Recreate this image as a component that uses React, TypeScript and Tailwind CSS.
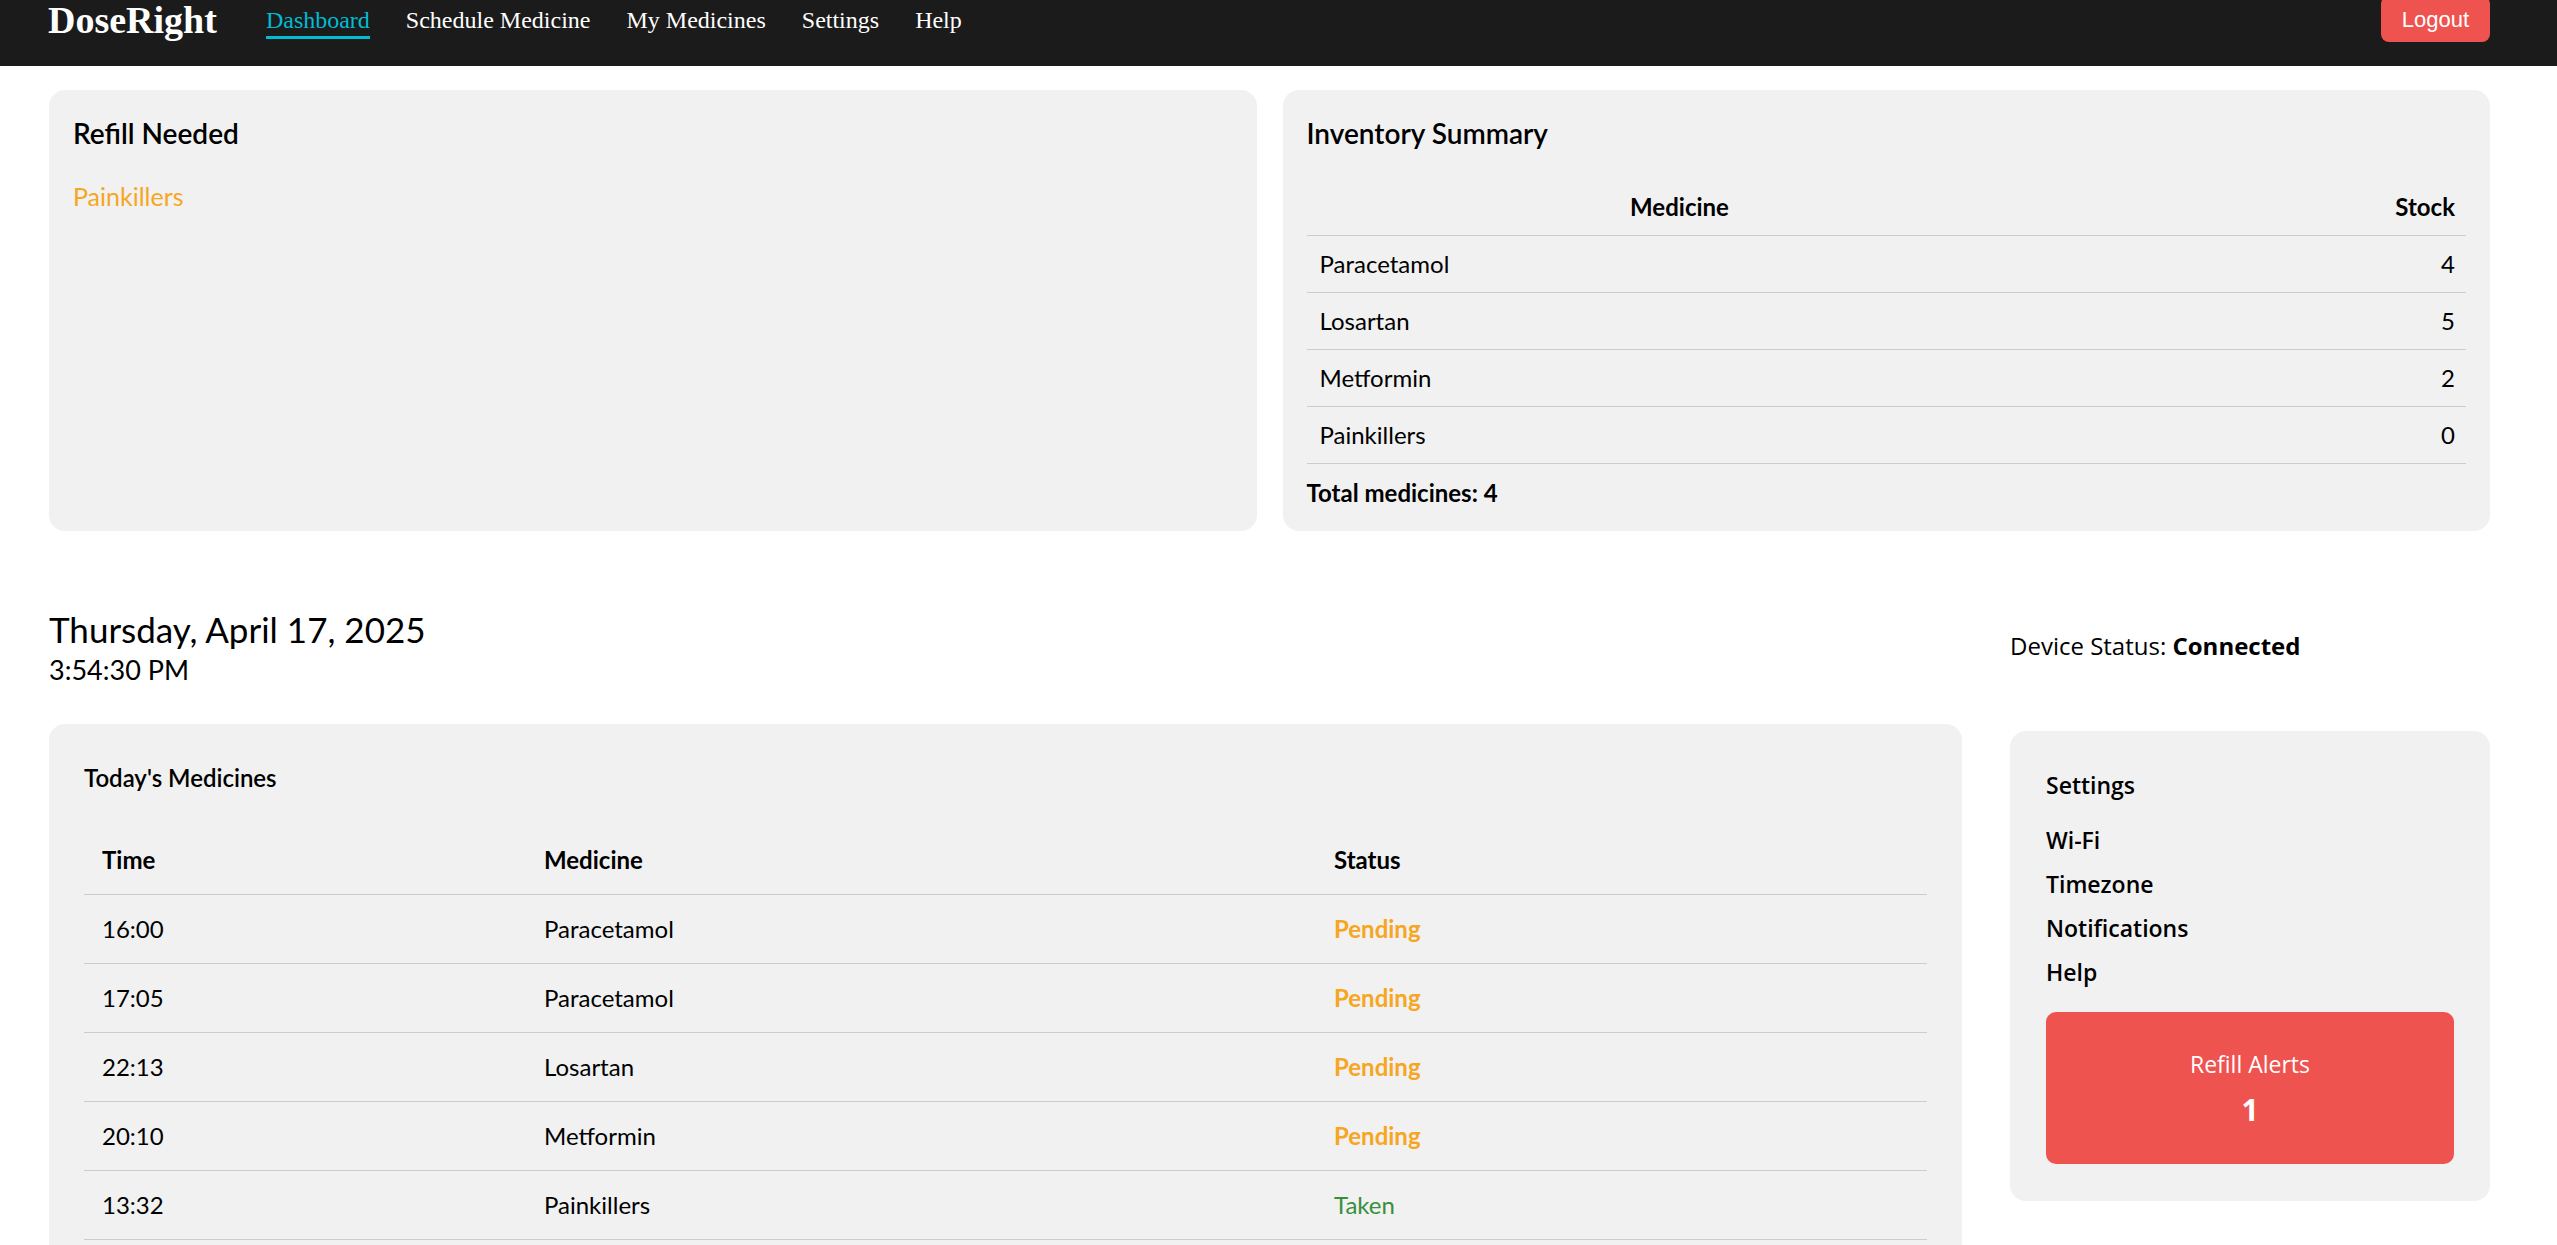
import React from 'react';

type Dose = { time: string; medicine: string; status: 'Pending' | 'Taken' };

const inventory = [
  { name: 'Paracetamol', stock: 4 },
  { name: 'Losartan', stock: 5 },
  { name: 'Metformin', stock: 2 },
  { name: 'Painkillers', stock: 0 },
];

const doses: Dose[] = [
  { time: '16:00', medicine: 'Paracetamol', status: 'Pending' },
  { time: '17:05', medicine: 'Paracetamol', status: 'Pending' },
  { time: '22:13', medicine: 'Losartan', status: 'Pending' },
  { time: '20:10', medicine: 'Metformin', status: 'Pending' },
  { time: '13:32', medicine: 'Painkillers', status: 'Taken' },
];

const navLinks = ['Dashboard', 'Schedule Medicine', 'My Medicines', 'Settings', 'Help'];

const App: React.FC = () => {
  return (
    <div className="min-h-screen bg-white text-black font-['Lato','Noto_Sans',sans-serif]">
      {/* Top navigation */}
      <nav className="h-[66px] bg-[#1b1b1b] flex items-start pl-[48px] pr-[67px] overflow-hidden">
        <span className="mt-[1px] text-[38px] leading-[38px] font-bold text-white font-['Liberation_Serif',serif]">
          DoseRight
        </span>
        <ul className="flex items-start gap-[36px] ml-[49px] font-['Liberation_Serif',serif]">
          {navLinks.map((link, i) => (
            <li key={link}>
              <a
                href="#"
                className={
                  i === 0
                    ? 'block mt-[6px] text-[24px] leading-[28px] pb-[2px] border-b-[3px] border-[#00bcd4] text-[#00bcd4]'
                    : 'block mt-[6px] text-[24px] leading-[28px] pb-[2px] text-white'
                }
              >
                {link}
              </a>
            </li>
          ))}
        </ul>
        <button className="ml-auto -mt-[4px] h-[46px] px-[21px] rounded-lg bg-[#ef5350] text-white text-[22px] font-['Liberation_Sans',Arial,sans-serif]">
          Logout
        </button>
      </nav>

      <main className="pl-[49px] pr-[67px] pt-[24px] pb-[60px]">
        {/* Refill + inventory */}
        <div className="grid grid-cols-2 gap-[26px]">
          <section className="bg-[#f1f1f1] rounded-[16px] px-[24px] pt-[26px] pb-[22px]">
            <h3 className="text-[28px] leading-[34px] font-semibold">Refill Needed</h3>
            <p className="mt-[31px] text-[25px] leading-[30px] text-[#f6a623]">Painkillers</p>
          </section>

          <section className="bg-[#f1f1f1] rounded-[16px] px-[24px] pt-[26px] pb-[22px]">
            <h3 className="text-[28px] leading-[34px] font-semibold">Inventory Summary</h3>
            <table className="mt-[29px] w-full text-[24px] leading-[32px] border-collapse">
              <thead>
                <tr className="border-b border-[#cccccc]">
                  <th className="w-[746px] px-[13px] py-[12px] text-center font-bold">Medicine</th>
                  <th className="px-[11px] py-[12px] text-right font-bold">Stock</th>
                </tr>
              </thead>
              <tbody>
                {inventory.map(item => (
                  <tr key={item.name} className="border-b border-[#cccccc]">
                    <td className="px-[13px] py-[12px]">{item.name}</td>
                    <td className="px-[11px] py-[12px] text-right">{item.stock}</td>
                  </tr>
                ))}
              </tbody>
            </table>
            <p className="mt-[13px] text-[24px] leading-[32px] font-bold">Total medicines: {inventory.length}</p>
          </section>
        </div>

        {/* Date, device + today's schedule */}
        <div className="mt-[74px] grid grid-cols-[1fr_480px] gap-x-[48px] gap-y-[37px]">
          <div className="pt-[2px]">
            <div className="text-[35px] leading-[44px]">Thursday, April 17, 2025</div>
            <div className="mt-[2px] text-[27px] leading-[34px]">3:54:30 PM</div>
          </div>
          <div className="self-center text-[24px] leading-[30px] font-['Open_Sans','Lato',sans-serif]">
            Device Status: <strong className="font-bold">Connected</strong>
          </div>

          <section className="bg-[#f1f1f1] rounded-[16px] px-[35px] pt-[38px] pb-[35px]">
            <h4 className="text-[24px] leading-[32px] font-semibold">Today's Medicines</h4>
            <table className="mt-[32px] w-full text-[24px] leading-[32px] border-collapse text-left">
              <thead>
                <tr className="border-b border-[#cccccc]">
                  <th className="w-[442px] px-[18px] py-[18px] font-bold">Time</th>
                  <th className="w-[790px] px-[18px] py-[18px] font-bold">Medicine</th>
                  <th className="px-[18px] py-[18px] font-bold">Status</th>
                </tr>
              </thead>
              <tbody>
                {doses.map((d, i) => (
                  <tr key={i} className="border-b border-[#cccccc]">
                    <td className="px-[18px] py-[18px]">{d.time}</td>
                    <td className="px-[18px] py-[18px]">{d.medicine}</td>
                    <td
                      className={
                        d.status === 'Pending'
                          ? 'px-[18px] py-[18px] font-bold text-[#f6a623]'
                          : 'px-[18px] py-[18px] text-[#388e3c]'
                      }
                    >
                      {d.status}
                    </td>
                  </tr>
                ))}
              </tbody>
            </table>
          </section>

          <aside className="self-start mt-[7px] bg-[#f1f1f1] rounded-[16px] px-[36px] pt-[38px] pb-[37px] font-['Open_Sans','Lato',sans-serif]">
            <h4 className="text-[23px] leading-[32px] font-semibold">Settings</h4>
            <ul className="mt-[23px] flex flex-col gap-[12px] text-[23px] leading-[32px] font-semibold">
              <li>Wi-Fi</li>
              <li>Timezone</li>
              <li>Notifications</li>
              <li>Help</li>
            </ul>
            <div className="mt-[24px] h-[152px] rounded-[10px] bg-[#ef5350] text-white flex flex-col items-center justify-center gap-[12px]">
              <span className="text-[23px] leading-[32px]">Refill Alerts</span>
              <span className="text-[30px] leading-[36px] font-bold">1</span>
            </div>
          </aside>
        </div>
      </main>
    </div>
  );
};

export default App;
